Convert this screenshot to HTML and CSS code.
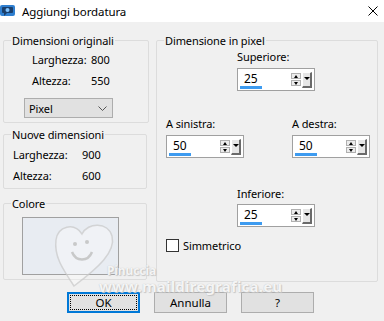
FILE: index.html
```html
<!DOCTYPE html>
<html lang="it">
<head>
    <meta charset="UTF-8">
    <meta name="viewport" content="width=device-width, initial-scale=1.0">
    <title>Aggiungi bordatura</title>
    <link rel="stylesheet" href="styles.css">
</head>
<body>

    <div id="dialog">
        <div class="titlebar">
            <svg class="app-icon" width="16" height="14" viewBox="0 0 16 14">
                <rect x="0" y="1" width="15" height="11" rx="2" fill="#2f7fd0"/>
                <path d="M3 3 h9 a1 1 0 0 1 1 1 v4 a1 1 0 0 1 -1 1 h-5 l-3 3 v-3 h-1 a1 1 0 0 1 -1 -1 v-4 a1 1 0 0 1 1 -1z" fill="#1b3f6b"/>
                <circle cx="7.5" cy="6" r="2" fill="#7fc3ff"/>
            </svg>
            <span class="title">Aggiungi bordatura</span>
            <svg class="close" width="10" height="10" viewBox="0 0 10 10">
                <path d="M0.5 0.5 L9.5 9.5 M9.5 0.5 L0.5 9.5" stroke="#000" stroke-width="1"/>
            </svg>
        </div>

        <div class="content">
            <div class="columns">
                <div class="left-col">
                    <fieldset class="group original">
                        <legend>Dimensioni originali</legend>
                        <div class="inner">
                            <div class="dims">
                                <span>Larghezza:</span><span>800</span>
                                <span>Altezza:</span><span>550</span>
                            </div>
                            <div class="select">
                                <span>Pixel</span>
                                <svg width="9" height="5" viewBox="0 0 9 5">
                                    <path d="M0.5 0.5 L4.5 4.5 L8.5 0.5" fill="none" stroke="#555" stroke-width="1"/>
                                </svg>
                            </div>
                        </div>
                    </fieldset>

                    <fieldset class="group newdims">
                        <legend>Nuove dimensioni</legend>
                        <div class="inner">
                            <div class="dims">
                                <span>Larghezza:</span><span>900</span>
                                <span>Altezza:</span><span>600</span>
                            </div>
                        </div>
                    </fieldset>

                    <fieldset class="group color">
                        <legend>Colore</legend>
                        <div class="inner">
                            <div class="swatch"></div>
                        </div>
                    </fieldset>
                </div>

                <fieldset class="group pixels">
                    <legend>Dimensione in pixel</legend>
                    <div class="inner">

                        <div class="field center">
                            <label>Superiore:</label>
                            <div class="spin">
                                <div class="spin-value">25<i class="bar"></i></div>
                                <div class="spin-arrows"><b class="up"></b><b class="down"></b></div>
                                <div class="spin-drop"></div>
                            </div>
                        </div>

                        <div class="side-row">
                            <div class="field">
                                <label>A sinistra:</label>
                                <div class="spin">
                                    <div class="spin-value">50<i class="bar"></i></div>
                                    <div class="spin-arrows"><b class="up"></b><b class="down"></b></div>
                                    <div class="spin-drop"></div>
                                </div>
                            </div>
                            <div class="field">
                                <label>A destra:</label>
                                <div class="spin">
                                    <div class="spin-value">50<i class="bar"></i></div>
                                    <div class="spin-arrows"><b class="up"></b><b class="down"></b></div>
                                    <div class="spin-drop"></div>
                                </div>
                            </div>
                        </div>

                        <div class="field center bottom">
                            <label>Inferiore:</label>
                            <div class="spin">
                                <div class="spin-value">25<i class="bar"></i></div>
                                <div class="spin-arrows"><b class="up"></b><b class="down"></b></div>
                                <div class="spin-drop"></div>
                            </div>
                        </div>

                        <div class="check">
                            <span class="box"></span>
                            <span>Simmetrico</span>
                        </div>
                    </div>
                </fieldset>
            </div>

            <div class="buttons">
                <button type="button" class="default"><span>OK</span></button>
                <button type="button">Annulla</button>
                <button type="button">?</button>
            </div>
        </div>

        <!-- watermark over the dialog -->
        <div class="watermark">
            <svg width="70" height="72" viewBox="0 0 70 72">
                <path d="M22 68 C10 50 2 38 4 22 C6 8 22 4 30 16 C36 4 56 4 60 18 C64 34 46 50 22 68 Z" fill="rgba(255,255,255,0.35)" stroke="rgba(200,200,200,0.7)" stroke-width="1.5"/>
                <path d="M20 34 C24 44 36 44 40 34" fill="none" stroke="rgba(190,190,190,0.8)" stroke-width="2.5"/>
                <circle cx="23" cy="26" r="2" fill="rgba(190,190,190,0.8)"/>
                <circle cx="35" cy="24" r="2" fill="rgba(190,190,190,0.8)"/>
            </svg>
            <span class="wm-name">Pinuccia</span>
            <span class="wm-site">www.maildiregrafica.eu</span>
        </div>
    </div>

</body>
</html>
```

FILE: styles.css
```css
body {
    margin: 0;
    background-color: #f0f0f0;
    font-family: "Noto Sans", "Open Sans", sans-serif;
    font-size: 11px;
    letter-spacing: -0.1px;
    line-height: 15px;
    color: #000;
}

#dialog {
    position: relative;
    width: 384px;
    height: 321px;
    overflow: hidden;
}

.titlebar {
    height: 22px;
    background-color: #fff;
    display: flex;
    align-items: center;
}

.titlebar .app-icon {
    margin-right: 6px;
}

.titlebar .title {
    font-size: 11.5px;
    flex: 1;
}

.titlebar .close {
    margin-right: 6px;
}

.content {
    padding: 11px 6px 0 3px;
}

.columns {
    display: flex;
    gap: 7px;
}

.left-col {
    display: flex;
    flex-direction: column;
}

fieldset.group {
    margin: 0;
    padding: 0;
    border: 1px solid #dcdcdc;
    border-radius: 2px;
    box-sizing: border-box;
}

fieldset.group legend {
    margin-left: 7px;
    padding: 0 1px;
}

fieldset.original {
    width: 146px;
    height: 90px;
}

fieldset.original .inner {
    padding-left: 20px;
}

fieldset.newdims {
    width: 144px;
    height: 62px;
    margin-top: 4px;
}

fieldset.newdims .inner {
    padding-left: 9px;
}

fieldset.color {
    width: 144px;
    height: 84px;
    margin-top: 7px;
}

fieldset.color .inner {
    padding-left: 18px;
}

.dims {
    display: grid;
    grid-template-columns: 69px auto;
    row-gap: 6px;
    margin-top: 5px;
}

fieldset.original .dims {
    grid-template-columns: 59px auto;
    padding-left: 8px;
    margin-top: 4px;
}

.select {
    margin-top: 10px;
    width: 89px;
    height: 20px;
    box-sizing: border-box;
    border: 1px solid #adadad;
    background-color: #e1e1e1;
    display: flex;
    align-items: center;
    justify-content: space-between;
    padding: 0 5px 0 4px;
}

.swatch {
    margin-top: 6px;
    width: 97px;
    height: 58px;
    box-sizing: border-box;
    border: 1px solid #a0a0a0;
    background-color: #e8ecf2;
}

fieldset.pixels {
    width: 224px;
    height: 249px;
}

fieldset.pixels .inner {
    padding: 1px 0 0 9px;
}

.field {
    display: flex;
    flex-direction: column;
    gap: 4px;
    align-items: flex-start;
}

.field.center {
    padding-left: 71px;
}

.side-row {
    display: flex;
    gap: 48px;
    margin-top: 25px;
}

.field.bottom {
    margin-top: 28px;
    gap: 3px;
}

.spin {
    width: 78px;
    height: 23px;
    box-sizing: border-box;
    border: 1px solid #a0a0a0;
    background-color: #fff;
    display: flex;
    align-items: center;
    padding-right: 2px;
    font-size: 12px;
}

.spin-value {
    position: relative;
    flex: 1;
    align-self: stretch;
    padding-left: 6px;
    line-height: 20px;
}

.spin-value .bar {
    position: absolute;
    left: 2px;
    bottom: 1px;
    width: 22px;
    height: 3px;
    background-color: #3d9bf0;
}

.spin-arrows {
    display: flex;
    flex-direction: column;
    gap: 1px;
    margin-right: 1px;
}

.spin-arrows b {
    display: block;
    width: 10px;
    height: 6px;
    box-sizing: border-box;
    border: 1px solid #b0b0b0;
    background-color: #ececec;
    position: relative;
}

.spin-arrows b::after {
    content: "";
    position: absolute;
    left: 2px;
    border-left: 2px solid transparent;
    border-right: 2px solid transparent;
}

.spin-arrows b.up::after {
    top: 1px;
    border-bottom: 3px solid #000;
}

.spin-arrows b.down::after {
    top: 1px;
    border-top: 3px solid #000;
}

.spin-drop {
    width: 10px;
    height: 16px;
    box-sizing: border-box;
    background-color: #e6e6e6;
    border-top: 1px solid #fff;
    border-left: 1px solid #fff;
    border-right: 2px solid #6a6a6a;
    border-bottom: 2px solid #6a6a6a;
    position: relative;
}

.spin-drop::after {
    content: "";
    position: absolute;
    left: 1px;
    top: 4px;
    border-left: 3px solid transparent;
    border-right: 3px solid transparent;
    border-top: 3px solid #000;
}

.check {
    display: flex;
    align-items: center;
    gap: 4px;
    margin-top: 11px;
}

.check .box {
    width: 13px;
    height: 13px;
    box-sizing: border-box;
    border: 1px solid #333;
    background-color: #fff;
}

.buttons {
    display: flex;
    gap: 14px;
    margin-top: 10px;
    padding-left: 64px;
}

.buttons button {
    width: 73px;
    height: 21px;
    box-sizing: border-box;
    border: 1px solid #adadad;
    background-color: #e1e1e1;
    font-family: inherit;
    font-size: 11.5px;
    color: #000;
    padding: 0;
}

.buttons button.default {
    border: 2px solid #0078d7;
    padding: 1px;
}

.buttons button.default span {
    display: block;
    height: 100%;
    box-sizing: border-box;
    border: 1px dotted #000;
    line-height: 13px;
}

.watermark {
    position: absolute;
    left: 52px;
    top: 218px;
    width: 220px;
    height: 80px;
    pointer-events: none;
}

.watermark svg {
    position: absolute;
    left: 0;
    top: 0;
}

.watermark span {
    position: absolute;
    font-weight: bold;
    color: rgba(255, 255, 255, 0.85);
    text-shadow: 0 0 1px #b8b8b8, 1px 1px 1px #c8c8c8;
}

.watermark .wm-name {
    left: 55px;
    top: 45px;
    font-size: 12px;
}

.watermark .wm-site {
    left: 47px;
    top: 61px;
    font-size: 15px;
    letter-spacing: 0.2px;
}
```
